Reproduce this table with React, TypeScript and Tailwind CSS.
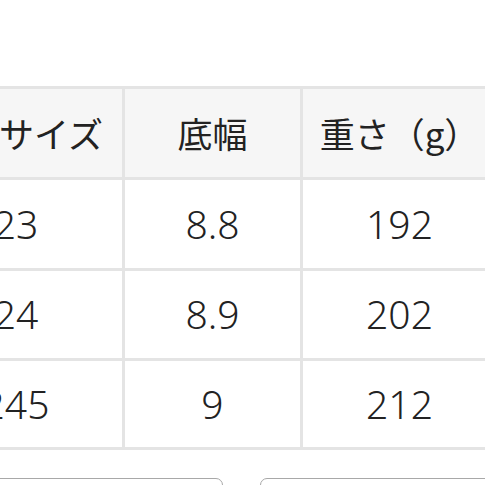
export default function App() {
  const rows = [
    { size: "23", width: "8.8", weight: "192", h: "h-[88px]" },
    { size: "24", width: "8.9", weight: "202", h: "h-[87px]" },
    { size: "245", width: "9", weight: "212", h: "h-[86px]" },
  ]

  const num = "flex items-center justify-center bg-white text-[39px] font-light [font-family:'Noto_Sans',sans-serif]"

  return (
    <div className="relative h-[485px] w-[485px] overflow-hidden bg-white text-[#222] [font-family:'Noto_Sans_CJK_JP','Noto_Sans',sans-serif]">
      {/* size table */}
      <div className="mt-[86px] ml-[-93px] grid w-[589px] grid-cols-[212px_175px_193px] gap-[3px] bg-[#e4e4e4] p-[3px]">
        <div className="flex h-[88px] items-center justify-center bg-[#f6f6f6] text-[35px]">靴のサイズ</div>
        <div className="flex h-[88px] items-center justify-center bg-[#f6f6f6] text-[35px]">底幅</div>
        <div className="flex h-[88px] items-center justify-center bg-[#f6f6f6] text-[35px]">重さ（g）</div>
        {rows.map((r) => (
          <>
            <div key={r.size + "a"} className={`${num} ${r.h}`}>{r.size}</div>
            <div key={r.size + "b"} className={`${num} ${r.h}`}>{r.width}</div>
            <div key={r.size + "c"} className={`${num} ${r.h}`}>{r.weight}</div>
          </>
        ))}
      </div>

      {/* buttons below */}
      <div className="mt-[28px] flex gap-[37px]">
        <div className="ml-[-20px] h-[60px] w-[243px] shrink-0 rounded-[7px] border border-[#a8a8a8] bg-white" />
        <div className="h-[60px] w-[260px] shrink-0 rounded-[7px] border border-[#a8a8a8] bg-white" />
      </div>
    </div>
  )
}
